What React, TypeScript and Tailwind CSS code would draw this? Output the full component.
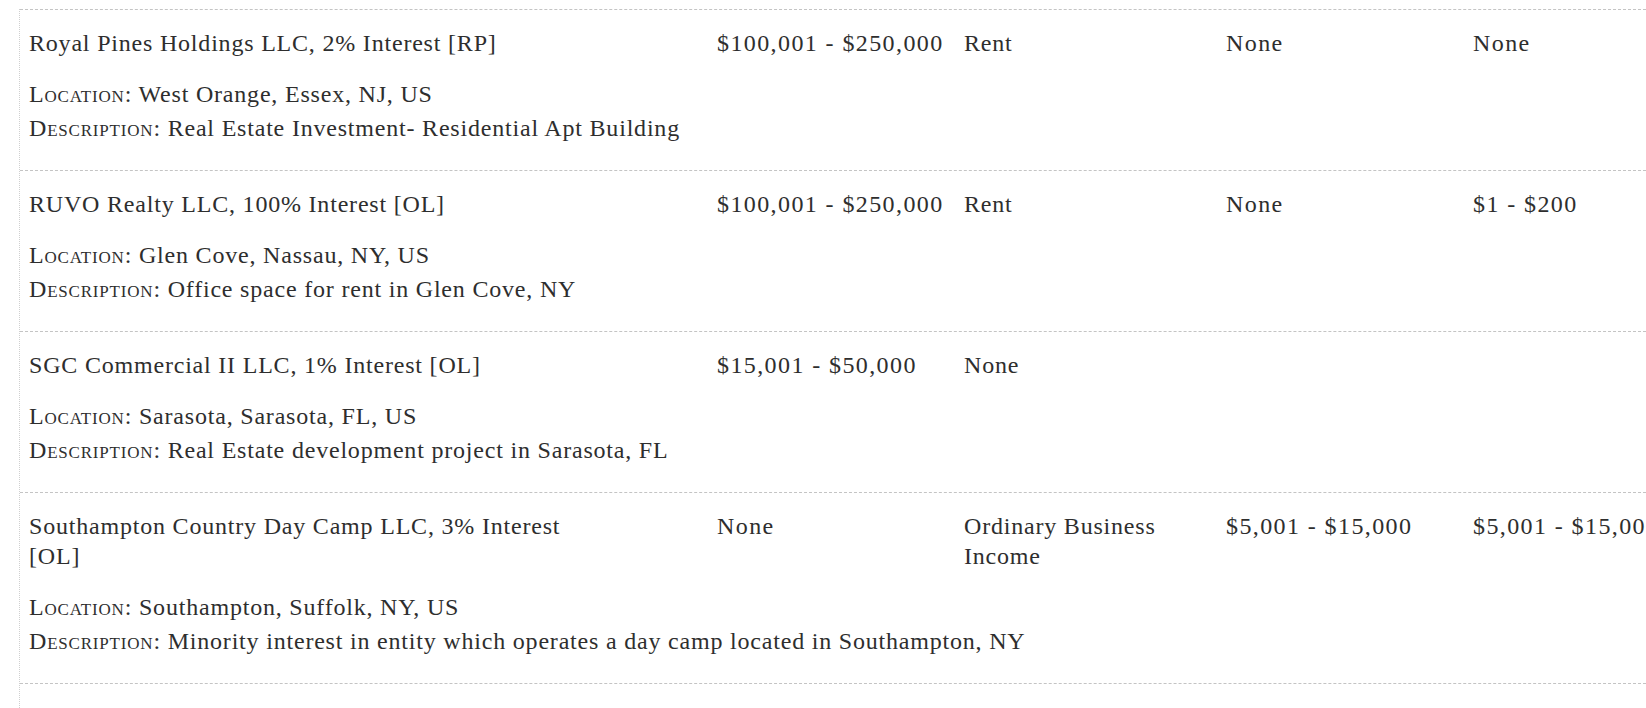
import React from "react";

type Holding = {
	title: string;
	value: string;
	incomeType: string;
	currentYear: string;
	priorYear: string;
	location: string;
	description: string;
};

const holdings: Holding[] = [
	{
		title: "Royal Pines Holdings LLC, 2% Interest [RP]",
		value: "$100,001 - $250,000",
		incomeType: "Rent",
		currentYear: "None",
		priorYear: "None",
		location: "West Orange, Essex, NJ, US",
		description: "Real Estate Investment- Residential Apt Building",
	},
	{
		title: "RUVO Realty LLC, 100% Interest [OL]",
		value: "$100,001 - $250,000",
		incomeType: "Rent",
		currentYear: "None",
		priorYear: "$1 - $200",
		location: "Glen Cove, Nassau, NY, US",
		description: "Office space for rent in Glen Cove, NY",
	},
	{
		title: "SGC Commercial II LLC, 1% Interest [OL]",
		value: "$15,001 - $50,000",
		incomeType: "None",
		currentYear: "",
		priorYear: "",
		location: "Sarasota, Sarasota, FL, US",
		description: "Real Estate development project in Sarasota, FL",
	},
	{
		title: "Southampton Country Day Camp LLC, 3% Interest [OL]",
		value: "None",
		incomeType: "Ordinary Business Income",
		currentYear: "$5,001 - $15,000",
		priorYear: "$5,001 - $15,000",
		location: "Southampton, Suffolk, NY, US",
		description: "Minority interest in entity which operates a day camp located in Southampton, NY",
	},
	{
		title: "Southampton Day Camp Realty LLC, 3% Interest [OL]",
		value: "$100,001 - $250,000",
		incomeType: "Rent",
		currentYear: "None",
		priorYear: "None",
		location: "Southampton, Suffolk, NY, US",
		description: "Real estate holding company",
	},
];

function Label({ name, text }: { name: string; text: string }) {
	return (
		<div className="leading-[34px]">
			<span className="[font-variant-caps:small-caps]">{name}:</span> {text}
		</div>
	);
}

function HoldingRow({ item }: { item: Holding }) {
	return (
		<div className="border-t border-dashed border-[#c4c4c4] pl-[9px] pt-[18px] pb-[25px]">
			<div className="grid grid-cols-[688px_247px_262px_247px_1fr] leading-[30px]">
				<div className="pr-[120px]">{item.title}</div>
				<div className="tracking-[1.4px]">{item.value}</div>
				<div className="pr-4">{item.incomeType}</div>
				<div className="tracking-[1.4px]">{item.currentYear}</div>
				<div className="tracking-[1.4px] whitespace-nowrap">{item.priorYear}</div>
			</div>
			<div className="mt-[19px]">
				<Label name="Location" text={item.location} />
				<Label name="Description" text={item.description} />
			</div>
		</div>
	);
}

export default function App() {
	return (
		<div className="h-[708px] w-full overflow-hidden bg-white pt-[9px] pl-[19px] font-['Liberation_Serif',serif] text-[24px] tracking-[0.8px] text-[#2e2e2e]">
			<div className="border-l border-dotted border-[#cfcfcf]">
				{holdings.map((item) => (
					<HoldingRow key={item.title} item={item} />
				))}
			</div>
		</div>
	);
}
